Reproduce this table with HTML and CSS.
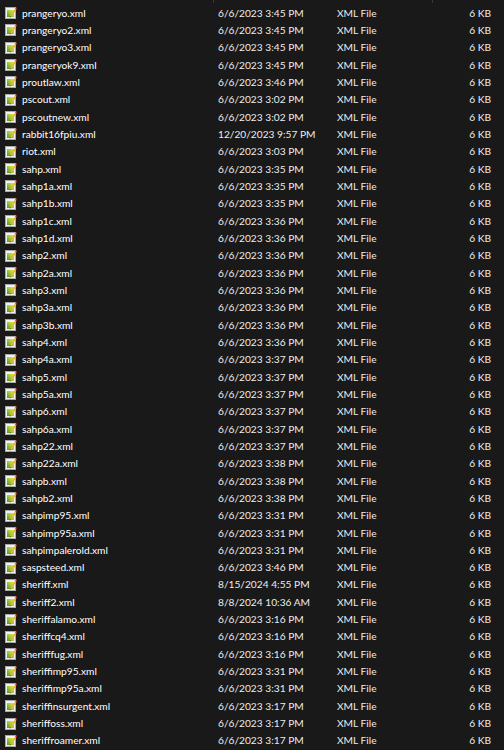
FILE: index.html
```html
<!DOCTYPE html>
<html>
<head>
<meta charset="utf-8">
<link rel="stylesheet" href="styles.css">
</head>
<body>
<svg class="defs" width="0" height="0">
  <defs>
    <linearGradient id="g" x1="0" y1="1" x2="1" y2="0">
      <stop offset="0" stop-color="#3f9a2a"/>
      <stop offset="0.55" stop-color="#a7cf3a"/>
      <stop offset="1" stop-color="#f2e24a"/>
    </linearGradient>
    <symbol id="ic" viewBox="0 0 12 13">
      <rect x="0.5" y="1.5" width="10" height="11" fill="#f2f2f2" stroke="#a8a8a8"/>
      <rect x="2" y="4" width="7" height="7" fill="url(#g)"/>
      <path d="M5 10 L10.2 2.6 L11.4 3.6 L6.2 11 Z" fill="#f0b030"/>
      <path d="M5 10 L6.2 11 L4.6 11.6 Z" fill="#6b4a20"/>
      <path d="M10.2 2.6 L11.2 1.2 L12 1.9 L11.4 3.6 Z" fill="#d9302a"/>
    </symbol>
  </defs>
</svg>
<div class="list">
  <div class="head"><span class="sep s1"></span><span class="sep s2"></span></div>
  <div class="row"><svg class="ico"><use href="#ic"/></svg><span class="name">prangeryo.xml</span><span class="date">6/6/2023 3:45 PM</span><span class="type">XML File</span><span class="size">6 KB</span></div>
  <div class="row"><svg class="ico"><use href="#ic"/></svg><span class="name">prangeryo2.xml</span><span class="date">6/6/2023 3:45 PM</span><span class="type">XML File</span><span class="size">6 KB</span></div>
  <div class="row"><svg class="ico"><use href="#ic"/></svg><span class="name">prangeryo3.xml</span><span class="date">6/6/2023 3:45 PM</span><span class="type">XML File</span><span class="size">6 KB</span></div>
  <div class="row"><svg class="ico"><use href="#ic"/></svg><span class="name">prangeryok9.xml</span><span class="date">6/6/2023 3:45 PM</span><span class="type">XML File</span><span class="size">6 KB</span></div>
  <div class="row"><svg class="ico"><use href="#ic"/></svg><span class="name">proutlaw.xml</span><span class="date">6/6/2023 3:46 PM</span><span class="type">XML File</span><span class="size">6 KB</span></div>
  <div class="row"><svg class="ico"><use href="#ic"/></svg><span class="name">pscout.xml</span><span class="date">6/6/2023 3:02 PM</span><span class="type">XML File</span><span class="size">6 KB</span></div>
  <div class="row"><svg class="ico"><use href="#ic"/></svg><span class="name">pscoutnew.xml</span><span class="date">6/6/2023 3:02 PM</span><span class="type">XML File</span><span class="size">6 KB</span></div>
  <div class="row"><svg class="ico"><use href="#ic"/></svg><span class="name">rabbit16fpiu.xml</span><span class="date">12/20/2023 9:57 PM</span><span class="type">XML File</span><span class="size">6 KB</span></div>
  <div class="row"><svg class="ico"><use href="#ic"/></svg><span class="name">riot.xml</span><span class="date">6/6/2023 3:03 PM</span><span class="type">XML File</span><span class="size">6 KB</span></div>
  <div class="row"><svg class="ico"><use href="#ic"/></svg><span class="name">sahp.xml</span><span class="date">6/6/2023 3:35 PM</span><span class="type">XML File</span><span class="size">6 KB</span></div>
  <div class="row"><svg class="ico"><use href="#ic"/></svg><span class="name">sahp1a.xml</span><span class="date">6/6/2023 3:35 PM</span><span class="type">XML File</span><span class="size">6 KB</span></div>
  <div class="row"><svg class="ico"><use href="#ic"/></svg><span class="name">sahp1b.xml</span><span class="date">6/6/2023 3:35 PM</span><span class="type">XML File</span><span class="size">6 KB</span></div>
  <div class="row"><svg class="ico"><use href="#ic"/></svg><span class="name">sahp1c.xml</span><span class="date">6/6/2023 3:36 PM</span><span class="type">XML File</span><span class="size">6 KB</span></div>
  <div class="row"><svg class="ico"><use href="#ic"/></svg><span class="name">sahp1d.xml</span><span class="date">6/6/2023 3:36 PM</span><span class="type">XML File</span><span class="size">6 KB</span></div>
  <div class="row"><svg class="ico"><use href="#ic"/></svg><span class="name">sahp2.xml</span><span class="date">6/6/2023 3:36 PM</span><span class="type">XML File</span><span class="size">6 KB</span></div>
  <div class="row"><svg class="ico"><use href="#ic"/></svg><span class="name">sahp2a.xml</span><span class="date">6/6/2023 3:36 PM</span><span class="type">XML File</span><span class="size">6 KB</span></div>
  <div class="row"><svg class="ico"><use href="#ic"/></svg><span class="name">sahp3.xml</span><span class="date">6/6/2023 3:36 PM</span><span class="type">XML File</span><span class="size">6 KB</span></div>
  <div class="row"><svg class="ico"><use href="#ic"/></svg><span class="name">sahp3a.xml</span><span class="date">6/6/2023 3:36 PM</span><span class="type">XML File</span><span class="size">6 KB</span></div>
  <div class="row"><svg class="ico"><use href="#ic"/></svg><span class="name">sahp3b.xml</span><span class="date">6/6/2023 3:36 PM</span><span class="type">XML File</span><span class="size">6 KB</span></div>
  <div class="row"><svg class="ico"><use href="#ic"/></svg><span class="name">sahp4.xml</span><span class="date">6/6/2023 3:36 PM</span><span class="type">XML File</span><span class="size">6 KB</span></div>
  <div class="row"><svg class="ico"><use href="#ic"/></svg><span class="name">sahp4a.xml</span><span class="date">6/6/2023 3:37 PM</span><span class="type">XML File</span><span class="size">6 KB</span></div>
  <div class="row"><svg class="ico"><use href="#ic"/></svg><span class="name">sahp5.xml</span><span class="date">6/6/2023 3:37 PM</span><span class="type">XML File</span><span class="size">6 KB</span></div>
  <div class="row"><svg class="ico"><use href="#ic"/></svg><span class="name">sahp5a.xml</span><span class="date">6/6/2023 3:37 PM</span><span class="type">XML File</span><span class="size">6 KB</span></div>
  <div class="row"><svg class="ico"><use href="#ic"/></svg><span class="name">sahp6.xml</span><span class="date">6/6/2023 3:37 PM</span><span class="type">XML File</span><span class="size">6 KB</span></div>
  <div class="row"><svg class="ico"><use href="#ic"/></svg><span class="name">sahp6a.xml</span><span class="date">6/6/2023 3:37 PM</span><span class="type">XML File</span><span class="size">6 KB</span></div>
  <div class="row"><svg class="ico"><use href="#ic"/></svg><span class="name">sahp22.xml</span><span class="date">6/6/2023 3:37 PM</span><span class="type">XML File</span><span class="size">6 KB</span></div>
  <div class="row"><svg class="ico"><use href="#ic"/></svg><span class="name">sahp22a.xml</span><span class="date">6/6/2023 3:38 PM</span><span class="type">XML File</span><span class="size">6 KB</span></div>
  <div class="row"><svg class="ico"><use href="#ic"/></svg><span class="name">sahpb.xml</span><span class="date">6/6/2023 3:38 PM</span><span class="type">XML File</span><span class="size">6 KB</span></div>
  <div class="row"><svg class="ico"><use href="#ic"/></svg><span class="name">sahpb2.xml</span><span class="date">6/6/2023 3:38 PM</span><span class="type">XML File</span><span class="size">6 KB</span></div>
  <div class="row"><svg class="ico"><use href="#ic"/></svg><span class="name">sahpimp95.xml</span><span class="date">6/6/2023 3:31 PM</span><span class="type">XML File</span><span class="size">6 KB</span></div>
  <div class="row"><svg class="ico"><use href="#ic"/></svg><span class="name">sahpimp95a.xml</span><span class="date">6/6/2023 3:31 PM</span><span class="type">XML File</span><span class="size">6 KB</span></div>
  <div class="row"><svg class="ico"><use href="#ic"/></svg><span class="name">sahpimpalerold.xml</span><span class="date">6/6/2023 3:31 PM</span><span class="type">XML File</span><span class="size">6 KB</span></div>
  <div class="row"><svg class="ico"><use href="#ic"/></svg><span class="name">saspsteed.xml</span><span class="date">6/6/2023 3:46 PM</span><span class="type">XML File</span><span class="size">6 KB</span></div>
  <div class="row"><svg class="ico"><use href="#ic"/></svg><span class="name">sheriff.xml</span><span class="date">8/15/2024 4:55 PM</span><span class="type">XML File</span><span class="size">6 KB</span></div>
  <div class="row"><svg class="ico"><use href="#ic"/></svg><span class="name">sheriff2.xml</span><span class="date">8/8/2024 10:36 AM</span><span class="type">XML File</span><span class="size">6 KB</span></div>
  <div class="row"><svg class="ico"><use href="#ic"/></svg><span class="name">sheriffalamo.xml</span><span class="date">6/6/2023 3:16 PM</span><span class="type">XML File</span><span class="size">6 KB</span></div>
  <div class="row"><svg class="ico"><use href="#ic"/></svg><span class="name">sheriffcq4.xml</span><span class="date">6/6/2023 3:16 PM</span><span class="type">XML File</span><span class="size">6 KB</span></div>
  <div class="row"><svg class="ico"><use href="#ic"/></svg><span class="name">sherifffug.xml</span><span class="date">6/6/2023 3:16 PM</span><span class="type">XML File</span><span class="size">6 KB</span></div>
  <div class="row"><svg class="ico"><use href="#ic"/></svg><span class="name">sheriffimp95.xml</span><span class="date">6/6/2023 3:31 PM</span><span class="type">XML File</span><span class="size">6 KB</span></div>
  <div class="row"><svg class="ico"><use href="#ic"/></svg><span class="name">sheriffimp95a.xml</span><span class="date">6/6/2023 3:31 PM</span><span class="type">XML File</span><span class="size">6 KB</span></div>
  <div class="row"><svg class="ico"><use href="#ic"/></svg><span class="name">sheriffinsurgent.xml</span><span class="date">6/6/2023 3:17 PM</span><span class="type">XML File</span><span class="size">6 KB</span></div>
  <div class="row"><svg class="ico"><use href="#ic"/></svg><span class="name">sheriffoss.xml</span><span class="date">6/6/2023 3:17 PM</span><span class="type">XML File</span><span class="size">6 KB</span></div>
  <div class="row"><svg class="ico"><use href="#ic"/></svg><span class="name">sheriffroamer.xml</span><span class="date">6/6/2023 3:17 PM</span><span class="type">XML File</span><span class="size">6 KB</span></div>
</div>
</body>
</html>
```
FILE: styles.css
```css
html, body {
  margin: 0;
  padding: 0;
  background: #191919;
  height: 100%;
  overflow: hidden;
}
.defs {
  position: absolute;
  width: 0;
  height: 0;
}
.list {
  display: flex;
  flex-direction: column;
  font-family: Lato, "Open Sans", sans-serif;
  font-size: 10.2px;
  color: #ffffff;
}
.head {
  height: 4px;
  display: flex;
}
.sep {
  display: block;
  width: 1px;
  height: 3px;
  background: #3a3a3a;
}
.s1 { margin-left: 213px; }
.s2 { margin-left: 218px; }
.row {
  display: grid;
  grid-template-columns: 17px 196px 119px 100px 54px;
  align-items: center;
  height: 17.33px;
  padding-left: 5px;
  white-space: nowrap;
}
.ico {
  width: 12px;
  height: 13px;
  display: block;
}
.name { color: #ffffff; }
.date, .type, .size { color: #ececec; }
.size { text-align: right; }
```
